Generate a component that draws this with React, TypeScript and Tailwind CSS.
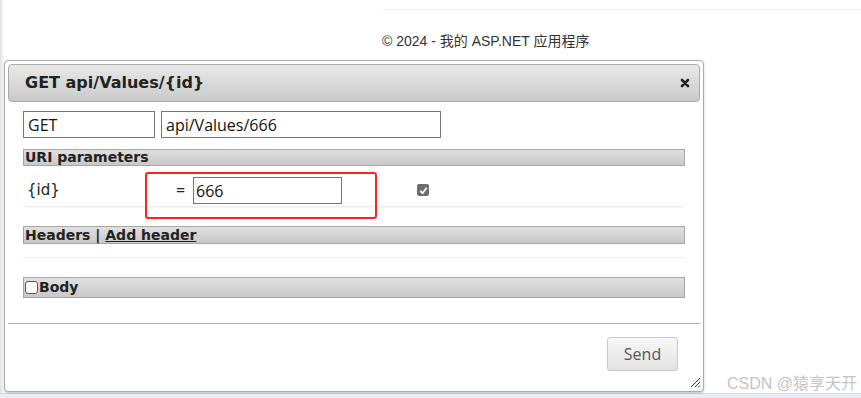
const bar =
    "flex items-center border border-[#a6a6a6] bg-linear-to-b from-[#e0e0e0] to-[#c8c8c8] px-[1px] text-[14px] font-bold text-[#222] [font-family:'DejaVu_Sans',sans-serif]";

function CloseIcon() {
    return (
        <svg width="10" height="10" viewBox="0 0 10 10">
            <path d="M2 2 L8 8 M8 2 L2 8" stroke="#222" strokeWidth="2.6" strokeLinecap="round" />
        </svg>
    );
}

function ResizeGrip() {
    return (
        <svg width="12" height="12" viewBox="0 0 12 12">
            <path d="M11 2 L2 11 M11 6 L6 11 M11 9.5 L9.5 11" stroke="#333" strokeWidth="1" />
        </svg>
    );
}

function CheckedBox() {
    return (
        <div className="flex h-[12px] w-[12px] items-center justify-center rounded-[2px] bg-[#6e6e6e]">
            <svg width="9" height="9" viewBox="0 0 10 10">
                <path d="M1.5 5.5 L4 8 L8.5 2" stroke="#fff" strokeWidth="2" fill="none" />
            </svg>
        </div>
    );
}

export default function App() {
    return (
        <div className="relative flex h-[398px] w-[861px] flex-col overflow-hidden bg-white">
            <div className="flex min-h-0 flex-1">
                <div className="w-[3px] bg-linear-to-r from-[#e2e2e2] to-[#f3f3f3]" />
                <div className="flex-1 pl-[1px]">
                    <div className="ml-[379px] mt-[9px] h-px bg-[#ededed]" />
                    <p className="ml-[378px] mt-[23px] h-[16px] text-[14px] leading-[16px] text-[#333] [font-family:'Liberation_Sans','Noto_Sans_CJK_SC',sans-serif]">
                        © 2024 - 我的 ASP.NET 应用程序
                    </p>

                    <div className="relative mt-[11px] flex h-[332px] w-[700px] flex-col rounded-[4px] border border-[#aaaaaa] bg-white p-[3px] shadow-[0_1px_2px_rgba(0,0,0,0.25)]">
                        <div className="flex h-[38px] items-center justify-between rounded-[4px] border border-[#aaaaaa] bg-linear-to-b from-[#e8e8e8] to-[#cacaca] pl-[16px] pr-[9px]">
                            <span className="text-[16px] font-bold text-[#222] [font-family:'DejaVu_Sans',sans-serif]">
                                GET api/Values/{"{id}"}
                            </span>
                            <CloseIcon />
                        </div>

                        <div className="flex-1 pl-[15px] pr-[15px] pt-[9px] [font-family:'Open_Sans',sans-serif]">
                            <div className="flex gap-[6px]">
                                <div className="flex h-[27px] w-[132px] items-center border border-[#767676] px-[4px] text-[16px] text-[#111]">
                                    GET
                                </div>
                                <div className="flex h-[27px] w-[280px] items-center border border-[#767676] px-[4px] text-[16px] text-[#111]">
                                    api/Values/666
                                </div>
                            </div>

                            <div className={`mt-[11px] h-[17px] ${bar}`}>URI parameters</div>

                            <div className="flex h-[41px] items-start rounded-[4px] border-b border-[#eeeeee] pt-[11px] shadow-[0_1px_1px_rgba(0,0,0,0.04)]">
                                <span className="w-[153px] pl-[4px] text-[15px] leading-[27px] text-[#222] [font-family:'DejaVu_Sans',sans-serif]">{"{id}"}</span>
                                <span className="w-[17px] text-[16px] leading-[27px] text-[#222]">=</span>
                                <div className="flex h-[27px] w-[149px] items-center border border-[#767676] px-[2px] text-[16px] text-[#111]">
                                    666
                                </div>
                                <div className="ml-[75px] mt-[7px]">
                                    <CheckedBox />
                                </div>
                            </div>

                            <div className={`mt-[19px] h-[18px] ${bar}`}>
                                Headers |&nbsp;<span className="underline">Add header</span>
                            </div>
                            <div className="mt-[13px] h-px bg-[#eeeeee]" />

                            <div className={`mt-[19px] h-[21px] ${bar}`}>
                                <span className="h-[13px] w-[13px] rounded-[3px] border border-[#555] bg-white" />
                                <span className="ml-[1px]">Body</span>
                            </div>
                        </div>

                        <div className="flex h-[65px] justify-end border-t border-[#aaaaaa] pr-[22px] pt-[13px]">
                            <button className="h-[34px] w-[71px] rounded-[3px] border border-[#c8c8c8] bg-linear-to-b from-[#f7f7f7] to-[#e2e2e2] text-[16px] text-[#555] [font-family:'Open_Sans',sans-serif]">
                                Send
                            </button>
                        </div>

                        <div className="absolute bottom-[3px] right-[2px]">
                            <ResizeGrip />
                        </div>

                        <div className="absolute left-[140px] top-[111px] h-[47px] w-[232px] rounded-[3px] border-2 border-[#ff2222]" />
                    </div>
                </div>
            </div>
            <div className="h-[5px] border-t border-[#d3d9e2] bg-[#e8eef6]" />

            <span className="absolute left-[727px] top-[372px] text-[16px] text-[#c4c4c4] [font-family:'Liberation_Sans','Noto_Sans_CJK_SC',sans-serif]">
                CSDN @猿享天开
            </span>
        </div>
    );
}
